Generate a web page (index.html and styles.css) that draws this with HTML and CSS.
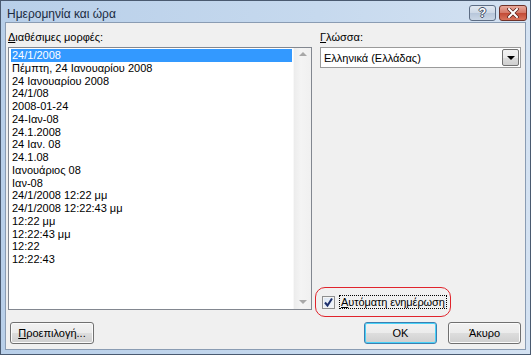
FILE: index.html
```html
<!DOCTYPE html>
<html lang="el">
<head>
    <meta charset="UTF-8">
    <title>Ημερομηνία και ώρα</title>
    <link rel="stylesheet" href="styles.css">
</head>
<body>
    <div class="window">
        <div class="titlebar">
            <span class="title">Ημερομηνία και ώρα</span>
            <div class="caption-buttons">
                <div class="cap-btn help">?</div>
                <div class="cap-btn close">
                    <svg width="12" height="10" viewBox="0 0 12 10">
                        <path d="M2 1 L10 9 M10 1 L2 9" stroke="#5a1f1a" stroke-width="3.4" stroke-linecap="square"/>
                        <path d="M2 1 L10 9 M10 1 L2 9" stroke="#fff" stroke-width="2" stroke-linecap="square"/>
                    </svg>
                </div>
            </div>
        </div>

        <div class="client">
            <div class="main">
                <!-- Formats -->
                <div class="col-left">
                    <label class="lbl"><u>Δ</u>ιαθέσιμες μορφές:</label>
                    <div class="listbox">
                        <ul class="items">
                            <li class="selected">24/1/2008</li>
                            <li>Πέμπτη, 24 Ιανουαρίου 2008</li>
                            <li>24 Ιανουαρίου 2008</li>
                            <li>24/1/08</li>
                            <li>2008-01-24</li>
                            <li>24-Ιαν-08</li>
                            <li>24.1.2008</li>
                            <li>24 Ιαν. 08</li>
                            <li>24.1.08</li>
                            <li>Ιανουάριος 08</li>
                            <li>Ιαν-08</li>
                            <li>24/1/2008 12:22 μμ</li>
                            <li>24/1/2008 12:22:43 μμ</li>
                            <li>12:22 μμ</li>
                            <li>12:22:43 μμ</li>
                            <li>12:22</li>
                            <li>12:22:43</li>
                        </ul>
                        <div class="scrollbar">
                            <span class="arrow up"></span>
                            <span class="arrow down"></span>
                        </div>
                    </div>
                </div>

                <!-- Language -->
                <div class="col-right">
                    <label class="lbl"><u>Γ</u>λώσσα:</label>
                    <div class="combo">
                        <span class="combo-text">Ελληνικά (Ελλάδας)</span>
                        <span class="combo-btn"><span class="tri"></span></span>
                    </div>
                    <div class="spacer"></div>
                    <div class="highlight-ring">
                        <span class="checkbox">
                            <svg width="11" height="11" viewBox="0 0 11 11">
                                <path d="M2 5.5 L4.5 8.5 L9 1.5" fill="none" stroke="#1d2f6b" stroke-width="2"/>
                            </svg>
                        </span>
                        <span class="check-label"><u>Α</u>υτόματη ενημέρωση</span>
                    </div>
                </div>
            </div>

            <div class="buttons">
                <button class="btn wide"><u>Π</u>ροεπιλογή...</button>
                <div class="right-buttons">
                    <button class="btn default">OK</button>
                    <button class="btn">Άκυρο</button>
                </div>
            </div>
        </div>
    </div>
</body>
</html>
```

FILE: styles.css
```css
* {
    margin: 0;
    padding: 0;
    box-sizing: border-box;
}

body {
    background: #fff;
    font-family: "Liberation Sans", Arial, sans-serif;
    font-size: 11px;
    color: #000;
}

.window {
    width: 531px;
    height: 355px;
    border: 1px solid #4a5a70;
    background: linear-gradient(to right, #b8cfe9 0%, #c6d9ee 60%, #d4e2f2 100%);
    display: flex;
    flex-direction: column;
}

.titlebar {
    height: 21px;
    display: flex;
    align-items: flex-start;
    justify-content: space-between;
    padding: 0 3px 0 6px;
}

.title {
    font-size: 12px;
    color: #1a2a40;
    margin-top: 6px;
}

.caption-buttons {
    display: flex;
    gap: 3px;
    margin-top: 4px;
}

.cap-btn {
    width: 28px;
    height: 16px;
    border: 1px solid #5d6d84;
    border-radius: 3px;
    display: flex;
    align-items: center;
    justify-content: center;
}

.cap-btn.help {
    width: 27px;
    background: linear-gradient(to bottom, #e2e9f2 0%, #cdd8e6 50%, #b7c6da 51%, #cbd7e6 100%);
    color: #fff;
    font-weight: bold;
    font-size: 12px;
    text-shadow: 1px 0 0 #3d4d65, -1px 0 0 #3d4d65, 0 1px 0 #3d4d65, 0 -1px 0 #3d4d65;
}

.cap-btn.close {
    background: linear-gradient(to bottom, #e9a99c 0%, #d47766 50%, #c24a36 51%, #d8735c 100%);
    border-color: #6e3229;
}

.client {
    flex: 1;
    margin: 0 4px 4px 4px;
    border: 1px solid #8a9cb3;
    background: #f0f0f0;
    display: flex;
    flex-direction: column;
    padding: 8px 4px 5px 2px;
}

.main {
    flex: 1;
    display: grid;
    grid-template-columns: 304px 201px;
    column-gap: 8px;
}

.col-left,
.col-right {
    display: flex;
    flex-direction: column;
}

.lbl {
    height: 13px;
    line-height: 13px;
    margin-bottom: 3px;
    color: #000;
}

.listbox {
    flex: 1;
    border: 1px solid #828790;
    background: #fff;
    display: flex;
}

.items {
    list-style: none;
    flex: 1;
    padding: 1px 1px 0 2px;
}

.items li {
    height: 12.75px;
    line-height: 13px;
    padding-left: 1px;
    white-space: nowrap;
}

.items li.selected {
    background: #3399ff;
    color: #fff;
}

.scrollbar {
    width: 18px;
    background: linear-gradient(to right, #ececec, #f4f4f4 40%, #f0f0f0);
    border-left: 1px solid #f8f8f8;
    position: relative;
}

.arrow {
    position: absolute;
    left: 5px;
    width: 0;
    height: 0;
    border-left: 4px solid transparent;
    border-right: 4px solid transparent;
}

.arrow.up {
    top: 4px;
    border-bottom: 4px solid #a8a8a8;
}

.arrow.down {
    bottom: 5px;
    border-top: 4px solid #a8a8a8;
}

.combo {
    height: 21px;
    border: 1px solid #9a9a9a;
    background: #fff;
    display: flex;
    align-items: center;
    justify-content: space-between;
    padding: 0 1px 0 3px;
}

.combo-btn {
    width: 17px;
    height: 17px;
    border: 1px solid #707070;
    border-radius: 2px;
    background: linear-gradient(to bottom, #f2f2f2 0%, #ebebeb 50%, #dddddd 51%, #cfcfcf 100%);
    display: flex;
    align-items: center;
    justify-content: center;
}

.tri {
    width: 0;
    height: 0;
    border-left: 4px solid transparent;
    border-right: 4px solid transparent;
    border-top: 4px solid #000;
}

.spacer {
    flex: 1;
}

.highlight-ring {
    align-self: flex-start;
    margin-left: -5px;
    margin-bottom: -7px;
    width: 136px;
    height: 30px;
    border: 1px solid #e0242c;
    border-radius: 10px;
    display: flex;
    align-items: center;
    padding-left: 6px;
    gap: 4px;
}

.checkbox {
    width: 13px;
    height: 13px;
    border: 1px solid #8e8f8f;
    background: linear-gradient(135deg, #dbe6f3, #f4f8fc);
    display: flex;
    align-items: center;
    justify-content: center;
    box-shadow: inset 0 0 0 1px #f4f4f4;
}

.check-label {
    border: 1px dotted #000;
    padding: 0 1px;
    line-height: 12px;
    letter-spacing: -0.1px;
}

.buttons {
    display: flex;
    justify-content: space-between;
    margin-top: 12px;
    padding-left: 2px;
}

.right-buttons {
    display: flex;
    gap: 11px;
}

.btn {
    width: 73px;
    height: 22px;
    font-family: "Liberation Sans", Arial, sans-serif;
    font-size: 11px;
    color: #000;
    border: 1px solid #707070;
    border-radius: 3px;
    background: linear-gradient(to bottom, #f2f2f2 0%, #ebebeb 50%, #dddddd 51%, #cfcfcf 100%);
    box-shadow: inset 0 0 0 1px #fbfbfb;
}

.btn.wide {
    width: 84px;
}

.btn.default {
    border-color: #3c7fb1;
    box-shadow: inset 0 0 0 1px #48d2f8;
}
```
